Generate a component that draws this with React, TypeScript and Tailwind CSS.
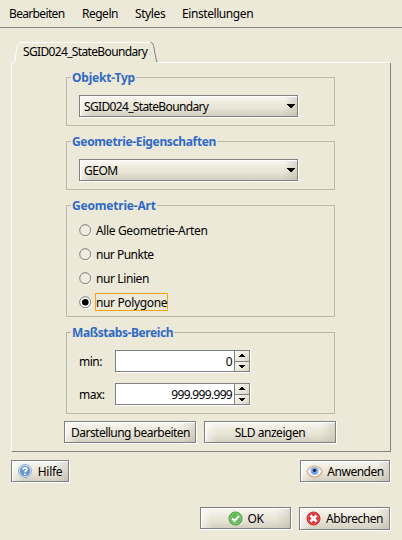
import type { ReactNode } from 'react';

const bevel =
  'box-border border border-[#7f8080] shadow-[1px_1px_0_#ffffff,inset_1px_1px_0_#ffffff]';
const raised =
  bevel + ' bg-[linear-gradient(to_right,#ffffff99_0px,#ffffff00_12px,#ffffff00_calc(100%-14px),#aca89955_100%),linear-gradient(to_bottom,#f8f7f2_0%,#ebe8da_45%,#e8e4d6_60%,#d3cfc0_100%)]';

function Group({ title, titleClass, className, children }: { title: string; titleClass: string; className: string; children: ReactNode }) {
  return (
    <section className={'relative w-[269px] border border-[#b9b9a7] ' + className}>
      <h2 className={"absolute top-[-9px] left-1 h-[18px] whitespace-nowrap bg-[#ece9d8] px-px text-[12px] leading-[18px] font-bold text-[#316ac5] " + titleClass}>{title}</h2>
      {children}
    </section>
  );
}

function Combo({ label, tracking }: { label: string; tracking: string }) {
  return (
    <div className={'ml-3 mt-[17px] flex h-[22px] w-[219px] items-center justify-between pl-1 pr-px ' + raised}>
      <span className={'mt-[2px] ' + tracking}>{label}</span>
      <svg width="9" height="4" shapeRendering="crispEdges"><path d="M0 0h8v1h-1v1h-1v1h-1v1h-2v-1h-1v-1h-1v-1h-1z" fill="#000" /></svg>
    </div>
  );
}

function Radio({ label, checked, tracking }: { label: string; checked?: boolean; tracking: string }) {
  return (
    <div className="flex h-6 items-center">
      <svg className="shrink-0" width="13" height="13">
        <circle cx="6.9" cy="6.9" r="5.6" fill="none" stroke="#fff" />
        <circle cx="6.2" cy="6.2" r="5.5" fill={checked ? '#fff' : '#efecdf'} stroke="#7b7b78" strokeWidth="1" />
        {checked && <circle cx="6.3" cy="6.3" r="3.3" fill="#000" />}
      </svg>
      <span className={'ml-[3px] h-[18px] border leading-[17px] ' + (checked ? 'w-[73px] border-[#f5a318] ' : 'border-transparent ') + tracking}>{label}</span>
    </div>
  );
}

function SpinButton({ up }: { up?: boolean }) {
  return (
    <div className="flex flex-1 items-center justify-center bg-[linear-gradient(135deg,#f8f6ef,#e5e1d2_75%,#d4cfbf)]">
      <svg width="6" height="3" shapeRendering="crispEdges">
        <path d={up ? 'M2 0h2v1h1v1h1v1h-6v-1h1v-1h1z' : 'M0 0h6v1h-1v1h-1v1h-2v-1h-1v-1h-1z'} fill="#000" />
      </svg>
    </div>
  );
}

function Spinner({ label, value, tracking }: { label: string; value: string; tracking: string }) {
  return (
    <div className="flex h-[22px] items-center pl-3">
      <span className="mt-[2px] w-9 tracking-[-0.5px]">{label}</span>
      <div className="flex h-[22px] w-[135px] border border-[#7f8080] bg-white shadow-[1px_1px_0_#fff]">
        <div className={'flex flex-1 items-center justify-end pr-[2px] pt-[2px] ' + tracking}>{value}</div>
        <div className="box-border flex w-[15px] flex-col gap-px border-l border-[#7f8080] bg-[#7f8080]">
          <SpinButton up />
          <SpinButton />
        </div>
      </div>
    </div>
  );
}

function Button({ className, children }: { className: string; children: ReactNode }) {
  return <button className={'flex items-center justify-center ' + raised + ' ' + className}>{children}</button>;
}

function HelpIcon() {
  return (
    <svg width="14" height="14" viewBox="0 0 14 14">
      <circle cx="7" cy="7" r="6.5" fill="#dce8f6" stroke="#8fadd6" />
      <circle cx="7" cy="7" r="5.2" fill="#6a95cc" />
      <path d="M5 5.600C5.100 3.200 9.100 3.300 8.900 5.500C8.800 6.800 7 6.700 7 8.200" fill="none" stroke="#fff" strokeWidth="1.700" />
      <circle cx="7" cy="10.200" r="1" fill="#fff" />
    </svg>
  );
}

function EyeIcon() {
  return (
    <svg width="17" height="13" viewBox="0 0 17 13">
      <path d="M1 6.500C2.500 2.500 6 1 9 1C12.500 1 15.500 3.500 16 6.500C14.500 10.500 12 12 8.500 12C5 12 2.500 10 1 6.500Z" fill="#fbf8f5" stroke="#d8a583" strokeWidth="1.200" />
      <path d="M1.500 5.500C4 2.300 12 1.800 15.500 5.500" fill="none" stroke="#e9c9b3" />
      <circle cx="8.500" cy="6" r="4" fill="#8fb6ed" />
      <circle cx="8.500" cy="6" r="3" fill="#6c9be2" />
      <circle cx="8.500" cy="5.500" r="1.400" fill="#071225" />
    </svg>
  );
}

function OkIcon() {
  return (
    <svg width="15" height="15" viewBox="0 0 15 15">
      <circle cx="7.500" cy="7.500" r="6.500" fill="#62b956" stroke="#3a9a38" />
      <circle cx="7.500" cy="7.500" r="5.500" fill="none" stroke="#9ad68c" strokeWidth=".7" />
      <path d="M4.200 7.500L6.600 10L11 5" fill="none" stroke="#fff" strokeWidth="2" />
    </svg>
  );
}

function CancelIcon() {
  return (
    <svg width="15" height="15" viewBox="0 0 15 15">
      <circle cx="7.500" cy="7.500" r="6.500" fill="#db3038" stroke="#c2242c" />
      <circle cx="7.500" cy="7.500" r="5.500" fill="none" stroke="#ef6970" strokeWidth=".7" />
      <path d="M4.500 4.500L10.500 10.500M10.500 4.500L4.500 10.500" stroke="#fff" strokeWidth="2.700" />
    </svg>
  );
}

export default function App() {
  return (
    <main className="flex h-[540px] w-[402px] flex-col overflow-hidden bg-[#ece9d8] font-['Noto_Sans','Open_Sans',sans-serif] text-[12px] leading-[18px] whitespace-nowrap text-black">
      <nav className="flex h-7 shrink-0 border-b border-[#7f8080] pl-[9px] pt-[5px]">
        <span className="w-[73px] tracking-[-0.66px]">Bearbeiten</span>
        <span className="w-[53px] tracking-[-0.5px]">Regeln</span>
        <span className="w-[47px] tracking-[-0.4px]">Styles</span>
        <span className="tracking-[-0.42px]">Einstellungen</span>
      </nav>
      <div className="mt-[14px] ml-[11px] h-[21px] w-[380px] shrink-0">
        <div className="relative h-[21px]">
          <svg className="absolute inset-0" width="380" height="21" fill="none">
            <path d="M.5 20.500H3.500C5.500 11 5 .5 10.500 .5H139.500" stroke="#fff" />
            <path d="M139.500 .5C144 .5 142.500 9 146 20" stroke="#7f8080" />
            <path d="M146 20.500H379" stroke="#fff" />
          </svg>
          <span className="relative ml-3 mt-[1px] inline-block tracking-[-0.65px]">SGID024_StateBoundary</span>
        </div>
      </div>
      <div className="ml-[11px] h-[389px] w-[380px] shrink-0 border-b border-l border-r border-b-[#7f8080] border-l-white border-r-[#7f8080] pl-[54px] pt-[14px]">
        <Group title="Objekt-Typ" titleClass="tracking-[-0.2px]" className="h-[49px]">
          <Combo label="SGID024_StateBoundary" tracking="tracking-[-0.65px]" />
        </Group>
        <Group title="Geometrie-Eigenschaften" titleClass="tracking-[-0.36px]" className="mt-[15px] h-[49px]">
          <Combo label="GEOM" tracking="tracking-[-0.5px]" />
        </Group>
        <Group title="Geometrie-Art" titleClass="tracking-[-0.2px]" className="mt-[15px] h-[112px] pl-3 pt-3">
          <Radio label="Alle Geometrie-Arten" tracking="tracking-[-0.36px]" />
          <Radio label="nur Punkte" tracking="tracking-[-0.5px]" />
          <Radio label="nur Linien" tracking="tracking-[-0.4px]" />
          <Radio label="nur Polygone" checked tracking="tracking-[-0.36px]" />
        </Group>
        <Group title="Maßstabs-Bereich" titleClass="tracking-[-0.42px]" className="mt-[15px] flex h-[82px] flex-col gap-[11px] pt-[17px]">
          <Spinner label="min:" value="0" tracking="tracking-[-0.5px]" />
          <Spinner label="max:" value="999.999.999" tracking="tracking-[-0.68px]" />
        </Group>
        <div className="-ml-[2px] mt-[7px] flex gap-2">
          <Button className="h-[22px] w-[132px]"><span className="mt-[2px] ml-[1px] tracking-[-0.52px]">Darstellung bearbeiten</span></Button>
          <Button className="h-[22px] w-[132px]"><span className="mt-[2px] tracking-[-0.45px]">SLD anzeigen</span></Button>
        </div>
      </div>
      <div className="mt-2 ml-[11px] flex w-[379px] shrink-0 justify-between">
        <Button className="h-[22px] w-[58px] gap-[6px]"><HelpIcon /><span className="mt-[2px] tracking-[-0.3px]">Hilfe</span></Button>
        <Button className="h-[22px] w-[90px] gap-[4px]"><EyeIcon /><span className="mt-[2px] tracking-[-0.5px]">Anwenden</span></Button>
      </div>
      <div className="mt-[25px] flex w-[390px] shrink-0 justify-end gap-2">
        <Button className="h-[22px] w-[91px] gap-[5px]"><OkIcon /><span className="mt-[2px] tracking-[-0.5px]">OK</span></Button>
        <Button className="h-[23px] w-[91px] gap-[5px]"><CancelIcon /><span className="mt-[1px] tracking-[-0.5px]">Abbrechen</span></Button>
      </div>
    </main>
  );
}
